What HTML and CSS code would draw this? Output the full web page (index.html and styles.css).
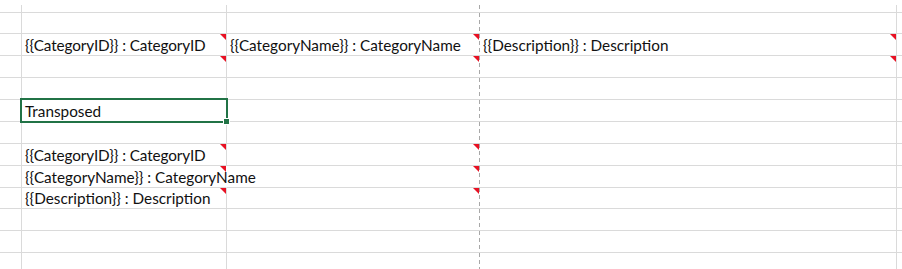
FILE: index.html
```html
<!DOCTYPE html>
<html>
<head>
<meta charset="utf-8">
<link rel="stylesheet" href="styles.css">
</head>
<body>
<div class="sheet">
  <!-- row 0 -->
  <div class="c c0"></div><div class="c ca"></div><div class="c cb"></div><div class="c cc"></div><div class="c cd"></div>
  <!-- row 1 -->
  <div class="c c0"></div><div class="c ca"></div><div class="c cb"></div><div class="c cc"></div><div class="c cd"></div>
  <!-- row 2 -->
  <div class="c c0"></div>
  <div class="c ca note"><span class="t tight">{{CategoryID}} : CategoryID</span></div>
  <div class="c cb note"><span class="t">{{CategoryName}} : CategoryName</span></div>
  <div class="c cc note"><span class="t">{{Description}} : Description</span></div>
  <div class="c cd"></div>
  <!-- row 3 -->
  <div class="c c0"></div><div class="c ca note"></div><div class="c cb note"></div><div class="c cc note"></div><div class="c cd"></div>
  <!-- row 4 -->
  <div class="c c0"></div><div class="c ca"></div><div class="c cb"></div><div class="c cc"></div><div class="c cd"></div>
  <!-- row 5 -->
  <div class="c c0"></div>
  <div class="c ca selected"><span class="t">Transposed</span><span class="sel"><span class="handle"></span></span></div>
  <div class="c cb"></div><div class="c cc"></div><div class="c cd"></div>
  <!-- row 6 -->
  <div class="c c0"></div><div class="c ca"></div><div class="c cb"></div><div class="c cc"></div><div class="c cd"></div>
  <!-- row 7 -->
  <div class="c c0"></div>
  <div class="c ca note"><span class="t tight">{{CategoryID}} : CategoryID</span></div>
  <div class="c cb note"></div><div class="c cc"></div><div class="c cd"></div>
  <!-- row 8 -->
  <div class="c c0"></div>
  <div class="c ca note spill"><span class="t">{{CategoryName}} : CategoryName</span></div>
  <div class="c cb note"></div><div class="c cc"></div><div class="c cd"></div>
  <!-- row 9 -->
  <div class="c c0"></div>
  <div class="c ca note"><span class="t">{{Description}} : Description</span></div>
  <div class="c cb note"></div><div class="c cc"></div><div class="c cd"></div>
  <!-- row 10 -->
  <div class="c c0"></div><div class="c ca"></div><div class="c cb"></div><div class="c cc"></div><div class="c cd"></div>
  <!-- row 11 -->
  <div class="c c0"></div><div class="c ca"></div><div class="c cb"></div><div class="c cc"></div><div class="c cd"></div>
  <!-- row 12 -->
  <div class="c c0"></div><div class="c ca"></div><div class="c cb"></div><div class="c cc"></div><div class="c cd"></div>
</div>
</body>
</html>
```
FILE: styles.css
```css
html, body {
  margin: 0;
  padding: 0;
  background: #ffffff;
  overflow: hidden;
}
body {
  width: 902px;
  height: 269px;
  padding-top: 5px;
  box-sizing: border-box;
}
.sheet {
  display: grid;
  grid-template-columns: 22px 205px 253px 417px 1fr;
  grid-template-rows: 8px 21px 22px 22px 22px 22px 22px 22px 22px 21px 22px 22px 22px;
  font-family: Lato, "Liberation Sans", sans-serif;
  font-size: 15.3px;
  color: #111111;
}
.c {
  box-sizing: border-box;
  border-right: 1px solid #dadada;
  border-bottom: 1px solid #dadada;
  position: relative;
  display: flex;
  align-items: flex-end;
  padding: 0 0 2px 3px;
  white-space: nowrap;
  min-width: 0;
}
.cb {
  border-right: none;
  background-image: repeating-linear-gradient(to bottom, #a8a8a8 0, #a8a8a8 4px, transparent 4px, transparent 7px);
  background-size: 1px 100%;
  background-position: right top;
  background-repeat: no-repeat;
  padding-right: 1px;
}
.cd { border-right: none; }
.t { line-height: 16px; }
.tight { letter-spacing: -0.1px; }
.spill { border-right-color: transparent; z-index: 2; }
.note::after {
  content: "";
  position: absolute;
  top: 0;
  right: 0;
  width: 0;
  height: 0;
  border-top: 6px solid #e81123;
  border-left: 6px solid transparent;
  z-index: 3;
}
.cb.note::after { right: 1px; }
.selected { z-index: 4; }
.sel {
  position: absolute;
  left: -2px;
  top: -2px;
  width: 208px;
  height: 25px;
  box-sizing: border-box;
  border: 2px solid #217346;
}
.handle {
  position: absolute;
  right: -4px;
  bottom: -4px;
  width: 5px;
  height: 5px;
  background: #217346;
  border: 1px solid #ffffff;
}
```
